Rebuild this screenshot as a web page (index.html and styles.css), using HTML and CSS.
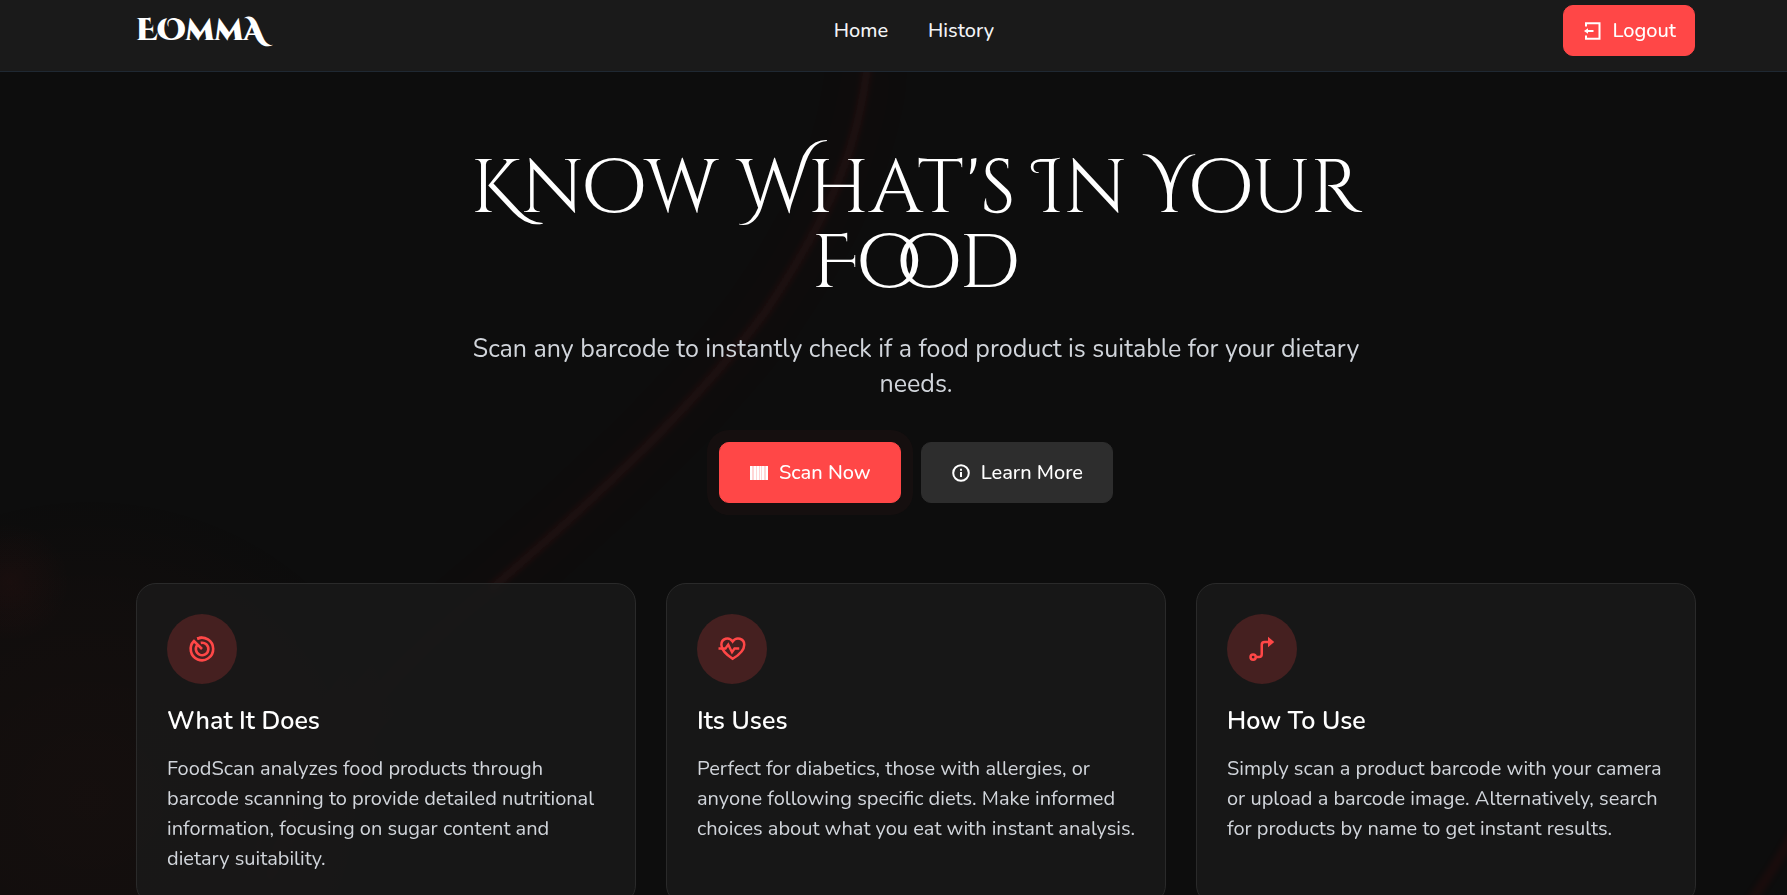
FILE: index.html
```html
<!DOCTYPE html>
<html lang="en">
<head>
<meta charset="utf-8">
<meta name="viewport" content="width=device-width, initial-scale=1">
<title>EOMMA</title>
<link rel="stylesheet" href="styles.css">
</head>
<body>
<svg class="backdrop" viewBox="0 0 1787 895" preserveAspectRatio="xMidYMid slice" aria-hidden="true">
  <defs>
    <radialGradient id="glow"><stop offset="0" stop-color="#ff2020" stop-opacity=".04"/><stop offset="1" stop-color="#ff2020" stop-opacity="0"/></radialGradient>
    <radialGradient id="haze"><stop offset="0" stop-color="#ff5030" stop-opacity=".035"/><stop offset=".6" stop-color="#ff5030" stop-opacity=".02"/><stop offset="1" stop-color="#ff5030" stop-opacity="0"/></radialGradient>
    <filter id="soft" x="-20%" y="-20%" width="140%" height="140%"><feGaussianBlur stdDeviation="3"/></filter>
    <filter id="wide" x="-20%" y="-20%" width="140%" height="140%"><feGaussianBlur stdDeviation="18"/></filter>
  </defs>
  <ellipse cx="90" cy="800" rx="330" ry="310" fill="url(#haze)"/>
  <circle cx="10" cy="582" r="60" fill="url(#glow)"/>
  <g fill="none" stroke="#ff3a3a">
    <path d="M868 60C858 160 820 230 766 311C700 400 600 495 490 590C400 660 320 740 260 900" stroke-width="50" stroke-opacity=".01" filter="url(#wide)"/>
    <path d="M868 60C858 160 820 230 766 311C700 400 600 495 490 590" stroke-width="8" stroke-opacity=".065" filter="url(#soft)"/>
    <path d="M1800 820Q1778 865 1748 905" stroke-width="9" stroke-opacity=".06" filter="url(#soft)"/>
  </g>
</svg>

<header class="topbar">
  <a class="logo" href="#">EOmmA</a>
  <nav class="nav">
    <a href="#">Home</a>
    <a href="#">History</a>
  </nav>
  <button class="btn btn-primary btn-compact" type="button">
    <svg class="icon" viewBox="0 0 20 20" fill="none" stroke="currentColor" stroke-width="2"><path d="M4 5.500V2.200H17.500V17.800H4V14.500M4 10H11.500"/><path d="M6 7.200V12.800L2 10Z" fill="currentColor" stroke="none"/></svg>
    Logout
  </button>
</header>

<main class="page">
  <section class="hero">
    <h1>Know What's In Your Food</h1>
    <p>Scan any barcode to instantly check if a food product is suitable for your dietary needs.</p>
    <div class="actions">
      <button class="btn btn-primary btn-pulse" type="button">
        <svg class="icon" viewBox="0 0 20 20"><path fill="currentColor" opacity=".78" d="M1 3H19V17H1Z"/><path fill="currentColor" d="M1 3h2v14H1zM5 3h2v14H5zM8 3h2v14H8zM11 3h1v14h-1zM13 3h2v14h-2zM17 3h2v14h-2z"/></svg>
        Scan Now
      </button>
      <button class="btn btn-dark" type="button">
        <svg class="icon" viewBox="0 0 20 20" fill="none" stroke="currentColor" stroke-width="2"><circle cx="10" cy="10" r="7.800"/><path d="M10 9V14M10 5.800V7.800"/></svg>
        Learn More
      </button>
    </div>
  </section>

  <section class="cards">
    <article class="card">
      <div class="badge"><svg viewBox="0 0 24 24" fill="none" stroke="currentColor" stroke-width="2.100"><path d="M12 12L5.600 5.600A9 9 0 1 0 8.200 3.800M8.500 8.500A5 5 0 1 0 11 7.100"/><path d="M8.200 3.800A9 9 0 0 1 12 3"/></svg></div>
      <h3>What It Does</h3>
      <p>FoodScan analyzes food products through barcode scanning to provide detailed nutritional information, focusing on sugar content and dietary suitability.</p>
    </article>
    <article class="card">
      <div class="badge"><svg viewBox="0 0 24 24" fill="none" stroke="currentColor" stroke-width="2"><path d="M12.500 19.800C7 16 3.500 13 3.500 8.500C3.500 3.500 9.500 1.800 12.500 6C15.500 1.800 21.800 3.500 21.800 8.500C21.800 13 18 16.500 12.500 19.800Z"/><path d="M1.200 11.600H6.800L9 8.500L12 14.600L14 11.600H17.800" stroke-width="1.900"/></svg></div>
      <h3>Its Uses</h3>
      <p>Perfect for diabetics, those with allergies, or anyone following specific diets. Make informed choices about what you eat with instant analysis.</p>
    </article>
    <article class="card">
      <div class="badge"><svg viewBox="0 0 24 24" fill="none" stroke="currentColor" stroke-width="2"><circle cx="4.900" cy="18.400" r="2.100"/><path d="M7 18.400H9.600Q11.800 18.400 11.800 16.200V8.600Q11.800 6.400 14 6.400H17"/><path d="M16.800 2.200L21.800 6.400L16.800 10.600Z" fill="currentColor" stroke="none"/></svg></div>
      <h3>How To Use</h3>
      <p>Simply scan a product barcode with your camera or upload a barcode image. Alternatively, search for products by name to get instant results.</p>
    </article>
  </section>
</main>
</body>
</html>
```

FILE: styles.css
```css
* {
  box-sizing: border-box;
  margin: 0;
}

body {
  min-height: 100vh;
  overflow-x: hidden;
  background: #0d0d0d;
  color: #fff;
  font-family: Nunito, Lato, sans-serif;
  font-size: 20px;
  line-height: 30px;
}

.backdrop {
  position: fixed;
  inset: 0;
  z-index: -1;
  width: 100%;
  height: 100%;
}

.topbar {
  display: flex;
  align-items: center;
  justify-content: space-between;
  padding: 5px 92px 15px 136px;
  background: #1a1a1a;
  border-bottom: 1px solid #1f2832;
}

.logo {
  color: #fff;
  font-family: "Cinzel Decorative", "Liberation Serif", serif;
  font-size: 30px;
  font-weight: 900;
  text-decoration: none;
}

.nav {
  display: flex;
  gap: 40px;
}

.nav a {
  color: #f3f4f6;
  font-weight: 500;
  text-decoration: none;
}

.btn {
  display: inline-flex;
  align-items: center;
  gap: 10px;
  padding: 15px 29px;
  border: 1px solid transparent;
  border-radius: 10px;
  color: #fff;
  font: inherit;
  font-weight: 500;
  line-height: 29px;
  cursor: pointer;
}

.btn-compact {
  padding: 10px 18px;
}

.btn-primary {
  background: #ff4747;
  border-color: #ff4747;
}

.btn-pulse {
  box-shadow: 0 0 0 12px rgba(255, 71, 71, 0.035);
}

.btn-dark {
  background: #2d2d2d;
  border-color: #2d2d2d;
}

.icon {
  width: 20px;
  height: 20px;
}

.page {
  padding: 80px 91px 80px 136px;
}

.hero {
  max-width: 930px;
  margin: 0 auto;
  text-align: center;
}

.hero h1 {
  font-family: "Cinzel Decorative", "Liberation Serif", serif;
  font-size: 75px;
  font-weight: 400;
  line-height: 75px;
}

.hero p {
  margin-top: 30px;
  color: #d1d5db;
  font-size: 25px;
  line-height: 35px;
}

.actions {
  display: flex;
  justify-content: center;
  gap: 20px;
  margin-top: 40px;
}

.cards {
  display: grid;
  grid-template-columns: repeat(3, 1fr);
  gap: 30px;
  margin-top: 80px;
}

.card {
  padding: 30px;
  background: rgba(26, 26, 26, 0.8);
  border: 1px solid #2a2a2a;
  border-radius: 20px;
}

.badge {
  display: grid;
  place-items: center;
  width: 70px;
  height: 70px;
  border-radius: 50%;
  background: #452020;
  color: #ff4747;
}

.badge svg {
  width: 30px;
  height: 30px;
}

.card h3 {
  margin-top: 20px;
  font-size: 25px;
  font-weight: 600;
  line-height: 35px;
}

.card p {
  margin-top: 15px;
  color: #d1d5db;
}
```
